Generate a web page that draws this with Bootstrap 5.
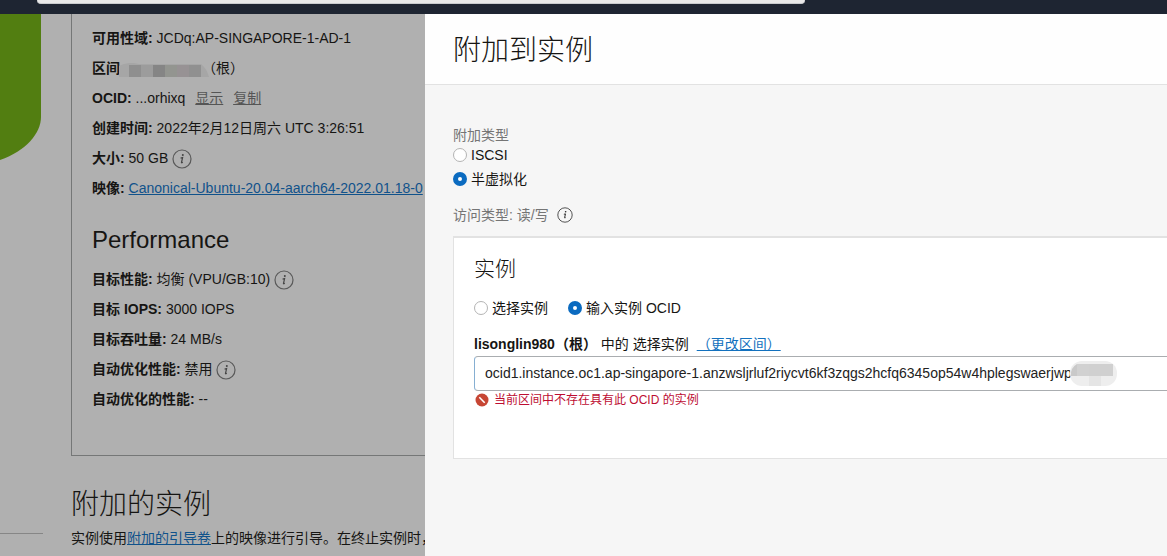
<!DOCTYPE html>
<html lang="zh-CN">
<head>
<meta charset="utf-8">
<meta name="viewport" content="width=device-width, initial-scale=1">
<title>附加到实例</title>
<link href="https://cdn.jsdelivr.net/npm/bootstrap@5.3.0/dist/css/bootstrap.min.css" rel="stylesheet">
<style>
body { font-family: "Liberation Sans", "Noto Sans CJK SC", sans-serif; font-size: 14px; line-height: 20px; color: #161513; background: #b0b0b0; }
a { color: #1371be; }
.top-strip { height: 14px; background: #1e2532; padding-left: 37px; }
.top-search { width: 68%; max-width: 770px; height: 4px; border: 0; border-bottom: 1px solid #c9cbce; border-radius: 0 0 4px 4px; background: #e9e9e9; }
.split { display: grid; grid-template-columns: 425fr 742fr; }
.under { background: #b0b0b0; }
.under a { color: #10528b; }
.under a.quiet { color: #555; margin-left: 6px; }
.side { width: 71px; }
.side-rule { width: 43px; margin-top: 373px; border-top: 1px solid #868686; }
.details { border: 1px solid #757777; border-width: 0 0 1px 1px; padding: 9px 0 41px 20px; }
.details div { line-height: 30px; height: 30px; }
.details h3 { font-size: 24px; line-height: 30px; margin: 22px 0 9px; font-weight: 400; }
.big-title { font-size: 28px; line-height: 40px; font-weight: 300; }
.under .big-title { margin: 29px 0 3px; }
.masked { width: 90px; height: 14px; margin: 3px -7px 0 -1px; }
.info { vertical-align: middle; color: #444; }
.drawer { background: #f6f6f6; }
.drawer-head { height: 71px; padding: 17px 28px; background: #fefefe; border-bottom: 1px solid #e2e2e2; }
.drawer-body { padding: 40px 0 0 28px; }
.muted { color: #757575; }
.pick { height: 20px; gap: 4px; }
.pick .form-check-input { width: 14px; height: 14px; margin: 0; border: 1px solid #b4b4b4; background-color: #fff; }
.pick .form-check-input:checked { border: 5px solid #0b6bc0; background: #fff; }
.panel-box { margin-top: 11px; padding: 17px 0 0 20px; min-height: 223px; background: #fff; border: 1px solid #e2e2e2; border-top-width: 2px; border-right: 0; }
.panel-box h2 { font-size: 21px; line-height: 28px; font-weight: 300; margin: 0 0 15px; }
.ocid-row { margin-top: 2px; }
.ocid-field { height: 35px; padding: 0 10px 2px; font-size: 14px; color: #222; border: 1px solid #aaadb0; border-left-color: #86afd2; border-right: 0; border-radius: 4px 0 0 4px; }
.ocid-mask { left: 596px; top: 5px; width: 48px; height: 25px; }
.field-error { color: #bd0d32; font-size: 12px; line-height: 16px; }
</style>
</head>
<body>
<div class="min-vh-100 d-flex flex-column overflow-hidden">
  <header class="top-strip"><input class="top-search d-block" type="search" aria-label="搜索"></header>
  <div class="split flex-grow-1">
    <main class="under d-flex overflow-hidden text-nowrap">
      <aside class="side flex-shrink-0">
        <svg class="d-block" width="71" height="146" aria-hidden="true"><path d="M0 0H41V103C41 119 26 137 0 146Z" fill="#527e11"/></svg>
        <div class="side-rule"></div>
      </aside>
      <div class="flex-grow-1 overflow-hidden">
        <section class="details">
          <div><b>可用性域:</b> JCDq:AP-SINGAPORE-1-AD-1</div>
          <div class="d-flex align-items-center"><b>区间</b><svg class="masked" viewBox="0 0 90 14" aria-hidden="true"><path d="M0 3Q10-2 20 1H82Q88 6 90 14H0Z" fill="#a6a6a6"/><path d="M10 2h12v12H10z" fill="#8f8f8f"/><path d="M22 2h12v12H22z" fill="#9c9c9c"/><path d="M34 2h12v12H34z" fill="#858585"/><path d="M46 2h12v12H46z" fill="#939590"/><path d="M58 2h12v12H58z" fill="#979294"/><path d="M70 2h12v12H70z" fill="#909090"/></svg><span>（根）</span></div>
          <div><b>OCID:</b> ...orhixq <a class="quiet" href="#">显示</a> <a class="quiet" href="#">复制</a></div>
          <div><b>创建时间:</b> 2022年2月12日周六 UTC 3:26:51</div>
          <div><b>大小:</b> 50 GB <svg class="info" width="20" height="20" viewBox="0 0 20 20" aria-hidden="true"><use href="#info-mark"/></svg></div>
          <div><b>映像:</b> <a href="#">Canonical-Ubuntu-20.04-aarch64-2022.01.18-0</a></div>
          <h3>Performance</h3>
          <div><b>目标性能:</b> 均衡 (VPU/GB:10) <svg class="info" width="20" height="20" viewBox="0 0 20 20" aria-hidden="true"><use href="#info-mark"/></svg></div>
          <div><b>目标 IOPS:</b> 3000 IOPS</div>
          <div><b>目标吞吐量:</b> 24 MB/s</div>
          <div><b>自动优化性能:</b> 禁用 <svg class="info" width="20" height="20" viewBox="0 0 20 20" aria-hidden="true"><use href="#info-mark"/></svg></div>
          <div><b>自动优化的性能:</b> --</div>
        </section>
        <h2 class="big-title">附加的实例</h2>
        <p class="mb-0">实例使用<a href="#">附加的引导卷</a>上的映像进行引导。在终止实例时，</p>
      </div>
    </main>
    <section class="drawer overflow-hidden" aria-labelledby="drawer-title">
      <div class="drawer-head"><h1 class="big-title mb-0" id="drawer-title">附加到实例</h1></div>
      <form class="drawer-body">
        <div class="muted" id="attach-label">附加类型</div>
        <div role="radiogroup" aria-labelledby="attach-label">
          <div class="pick d-flex align-items-center"><input class="form-check-input" type="radio" name="attach" id="iscsi"><label for="iscsi">ISCSI</label></div>
          <div class="pick d-flex align-items-center mt-1"><input class="form-check-input" type="radio" name="attach" id="para" checked><label for="para">半虚拟化</label></div>
        </div>
        <div class="muted d-flex align-items-center gap-2 mt-3">访问类型: 读/写 <svg width="16" height="16" viewBox="0 0 20 20" color="#222" aria-hidden="true"><use href="#info-mark"/></svg></div>
        <section class="panel-box">
          <h2>实例</h2>
          <div class="d-flex" role="radiogroup" aria-label="实例">
            <div class="pick d-flex align-items-center"><input class="form-check-input" type="radio" name="mode" id="choose"><label for="choose">选择实例</label></div>
            <div class="pick d-flex align-items-center ms-3 ps-1"><input class="form-check-input" type="radio" name="mode" id="enter" checked><label for="enter">输入实例 OCID</label></div>
          </div>
          <div class="d-flex mt-3"><label for="ocid"><b>lisonglin980（根）</b> 中的 选择实例</label><a class="ms-2" href="#">（更改区间）</a></div>
          <div class="position-relative ocid-row">
            <input class="form-control shadow-none ocid-field" id="ocid" type="text" value="ocid1.instance.oc1.ap-singapore-1.anzwsljrluf2riycvt6kf3zqgs2hcfq6345op54w4hplegswaerjwp">
            <svg class="ocid-mask position-absolute" viewBox="0 0 48 25" aria-hidden="true"><rect width="47" height="25" rx="12" fill="#eee"/><path d="M1 15Q0 7 7 3V15Z" fill="#c9c9c9"/><path d="M7 3h12v12H7z" fill="#d1d1d1"/><path d="M19 3h24v12H19z" fill="#d0d0d0"/><path d="M19 15h12v10H19z" fill="#e5e5e5"/></svg>
          </div>
          <div class="field-error d-flex align-items-center gap-1"><svg width="16" height="18" viewBox="0 0 16 18" aria-hidden="true"><circle cx="8" cy="9" r="6.5" fill="#c74634"/><path d="M5.3 6.3l5.4 5.4" stroke="#fff" stroke-width="1.6"/></svg>当前区间中不存在具有此 OCID 的实例</div>
        </section>
      </form>
    </section>
  </div>
</div>
<svg width="0" height="0" class="position-absolute" aria-hidden="true"><defs><symbol id="info-mark" viewBox="0 0 20 20"><circle cx="10" cy="10" r="9" fill="none" stroke="currentColor" stroke-width="1.2" opacity=".8"/><circle cx="10.8" cy="6" r="1" fill="currentColor"/><path d="M8.6 9.1l2-.5-1.1 4.8q-.2.8 1.3-.1" fill="none" stroke="currentColor" stroke-width="1.2"/></symbol></defs></svg>
<script src="https://cdn.jsdelivr.net/npm/bootstrap@5.3.0/dist/js/bootstrap.bundle.min.js"></script>
</body>
</html>
